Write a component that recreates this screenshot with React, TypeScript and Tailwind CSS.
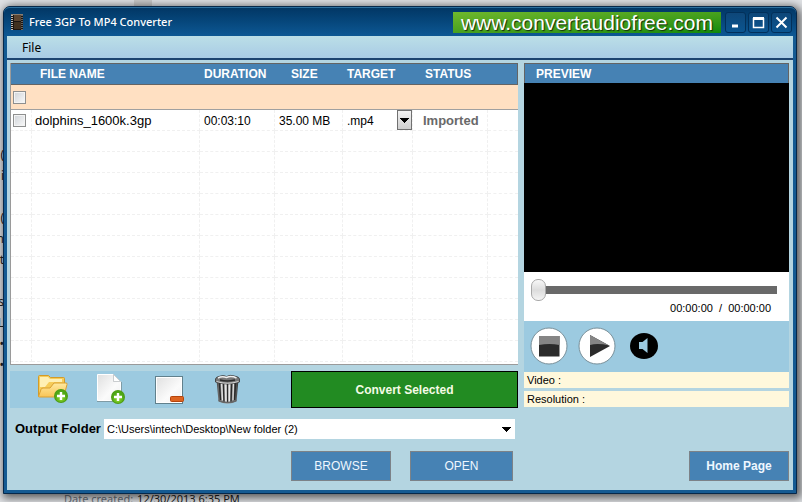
import { useState } from "react";
import type { ReactNode } from "react";

const COLUMNS = [
  { label: "FILE NAME", className: "pl-2" },
  { label: "DURATION", className: "pl-1" },
  { label: "SIZE", className: "pl-4" },
  { label: "TARGET", className: "pl-1" },
  { label: "STATUS", className: "pl-3" },
];

const FILES = [
  { name: "dolphins_1600k.3gp", duration: "00:03:10", size: "35.00 MB", target: ".mp4", status: "Imported" },
];

const EMPTY_ROWS = 11;

const CELL = "border-r border-b border-dashed border-[#f0f0f0] p-0";
const TEXT_CELL = "border-r border-b border-dashed border-[#f0f0f0] pt-[2px] pr-0 pb-0 leading-[18px]";

function Caret() {
  return (
    <svg width="9" height="5" viewBox="0 0 9 5" aria-hidden="true" shapeRendering="crispEdges">
      <path d="M0 0h9v1H8v1H7v1H6v1H5v1H4V4H3V3H2V2H1V1H0z" />
    </svg>
  );
}

function FilmIcon() {
  return (
    <svg width="12" height="16" viewBox="0 0 12 16" aria-hidden="true">
      <rect width="12" height="16" fill="#1b1512" />
      <rect x="3" y="1" width="7" height="6" fill="#5c4632" />
      <rect x="3" y="8" width="7" height="7" fill="#41301f" />
      <path d="M1 1v15" stroke="#f0ede8" strokeWidth="1.5" strokeDasharray="1 1" />
      <path d="M11 1v15" stroke="#b9b3aa" strokeWidth="1" strokeDasharray="1 1" />
      <path d="M0 .5h12" stroke="#8a7d70" />
    </svg>
  );
}

function PlusBadge({ x, y }: { x: number; y: number }) {
  return (
    <g transform={`translate(${x} ${y})`}>
      <circle r="7" fill="#4d9c12" />
      <circle r="6" fill="url(#badge)" />
      <path d="M-4 0h8M0-4v8" stroke="#fff" strokeWidth="2.4" />
    </g>
  );
}

function AddFolderIcon() {
  return (
    <svg width="32" height="32" viewBox="0 0 32 32" aria-hidden="true">
      <defs>
        <linearGradient id="folder" x1="0" y1="0" x2="0" y2="1">
          <stop offset="0" stopColor="#ffeaa0" />
          <stop offset="1" stopColor="#f8c455" />
        </linearGradient>
        <radialGradient id="badge" cy=".7">
          <stop offset="0" stopColor="#8fdb2b" />
          <stop offset="1" stopColor="#4fa715" />
        </radialGradient>
      </defs>
      <path d="M1.5 23.5v-20q0-1 1-1h9l2 2h13q1 0 1 1v4.500" fill="#f6cc59" stroke="#d39b28" />
      <path d="M3 4h8l2 2h12v3H12l-4 5H3z" fill="#fff0b5" />
      <path d="M1.5 23.500L4 16.500q.500-1.500 2-1.500h7l4-5h12q1.500 0 1 1.500L27 23q-.300 1-1.500 1h-23q-1 0-1-.500z" fill="url(#folder)" stroke="#d99f31" />
      <PlusBadge x={24} y={23} />
    </svg>
  );
}

function AddFileIcon() {
  return (
    <svg width="32" height="32" viewBox="0 0 32 32" aria-hidden="true">
      <defs>
        <linearGradient id="paper" x1="0" y1="0" x2="1" y2="1">
          <stop offset="0" stopColor="#dfdfdf" />
          <stop offset=".6" stopColor="#fbfbfb" />
          <stop offset="1" stopColor="#efefef" />
        </linearGradient>
      </defs>
      <path d="M1.500 1.500h16l7 7v19h-23z" fill="url(#paper)" stroke="#fff" />
      <path d="M1 28.500h24.500M25.500 9v19" fill="none" stroke="#7f9ba5" />
      <path d="M17.500 1.500v7h7z" fill="#fff" stroke="#b5b9bb" strokeWidth=".7" />
      <PlusBadge x={22} y={24} />
    </svg>
  );
}

function RemoveIcon() {
  return (
    <svg width="32" height="32" viewBox="0 0 32 32" aria-hidden="true">
      <rect x=".500" y="3.500" width="27" height="27" fill="url(#paper)" stroke="#61808c" />
      <rect x="1.500" y="4.500" width="25" height="25" fill="none" stroke="#fff" />
      <rect x="15.500" y="23.500" width="13" height="5" rx="1" fill="#dd6320" stroke="#b5440c" />
    </svg>
  );
}

function TrashIcon() {
  return (
    <svg width="32" height="32" viewBox="0 0 32 32" aria-hidden="true">
      <defs>
        <linearGradient id="can">
          <stop offset="0" stopColor="#444" />
          <stop offset=".3" stopColor="#bbb" />
          <stop offset=".5" stopColor="#f4f4f4" />
          <stop offset=".75" stopColor="#888" />
          <stop offset="1" stopColor="#333" />
        </linearGradient>
      </defs>
      <path d="M2.500 7l2 21q9 5 18 0l2-21z" fill="url(#can)" />
      <path d="M5.500 10l1 17M9.500 11l.500 18M13.500 11v18M17.500 11l-.500 18M21.500 10l-1 17" stroke="#2a2a2a" strokeWidth="1.500" />
      <path d="M7.500 10l1 17M11.500 11l.500 18M15.500 11v18M19.500 10l-.500 17" stroke="#e8e8e8" />
      <path d="M4.500 26.500q9 4.500 18 0v2q-9 4-18 0z" fill="#666" />
      <path d="M1.500 6q0-2 5-3 3-1 6 .500 4-2 8-.500 5 1 5 3v3q-12 4-24 0z" fill="#777" stroke="#333" strokeWidth=".8" />
      <path d="M4 5q4-2 8.500-.500 5-2 10 .500" fill="none" stroke="#efefef" strokeWidth="1.500" />
      <path d="M6 7q7 2 15 0" fill="none" stroke="#2b2b2b" strokeWidth="1.500" />
      <path d="M2.500 8.500q11 3.500 22 0" fill="none" stroke="#d8d8d8" />
    </svg>
  );
}

function StopIcon() {
  return (
    <svg width="38" height="38" viewBox="0 0 38 38" aria-hidden="true">
      <circle cx="19" cy="19" r="18" fill="#fff" stroke="#788f99" />
      <path d="M9 9h20.500v20.500H9z" fill="#2b2b2b" />
      <path d="M9 9h20.500v9q-10-2-20.500 0z" fill="#858585" />
    </svg>
  );
}

function PlayIcon() {
  return (
    <svg width="38" height="38" viewBox="0 0 38 38" aria-hidden="true">
      <circle cx="19" cy="19" r="18" fill="#fff" stroke="#788f99" />
      <path d="M12 8v22l20-11z" fill="#2b2b2b" />
      <path d="M12 8v10q8-2 19 .500z" fill="#858585" />
    </svg>
  );
}

function SpeakerIcon() {
  return (
    <svg width="28" height="28" viewBox="0 0 28 28" aria-hidden="true">
      <ellipse cx="14" cy="14" rx="14" ry="13" />
      <path d="M9 10h3.500l5-4v15l-5-4H9z" fill="#9ccae0" />
    </svg>
  );
}

function WindowButton({ label, children }: { label: string; children: ReactNode }) {
  return (
    <button
      type="button"
      aria-label={label}
      className="flex h-[21px] w-[21px] items-center justify-center rounded-[3px] border border-[#02305a] bg-gradient-to-b from-[#0e4779] to-[#0a5590]"
    >
      <svg width="13" height="13" viewBox="0 0 13 13" fill="none" stroke="#fff" strokeWidth="2" aria-hidden="true">
        {children}
      </svg>
    </button>
  );
}

function Check({ label, checked, onChange }: { label: string; checked: boolean; onChange: () => void }) {
  return (
    <input
      type="checkbox"
      aria-label={label}
      checked={checked}
      onChange={onChange}
      className="ml-[2px] block h-[13px] w-[13px] appearance-none border border-[#8e8f8f] bg-gradient-to-br from-[#cfd3d8] to-[#fafafa] shadow-[inset_0_0_0_1px_#f4f4f4] checked:bg-[#4682b4]"
    />
  );
}

// Slivers of the explorer window lying under the converter
function Backdrop() {
  return (
    <div aria-hidden="true" className="absolute inset-0 overflow-hidden bg-[#dfe1e4] font-['Noto_Sans'] text-[12px] text-[#222]">
      <div className="absolute top-0 left-[134px] h-2 w-[18px] bg-[#c9c9c9]" />
      <div className="absolute top-[144px] right-full -mr-1 flex flex-col items-end leading-[21px]">
        <span>(</span>
        <span>i</span>
        <span className="mt-[21px]">(</span>
        <span>n</span>
        <span>t</span>
        <span className="mt-[21px]">s</span>
        <span>L</span>
        <span>•</span>
        <span>•</span>
      </div>
      <div className="absolute top-[490px] left-16 flex gap-1 text-[11px] leading-[18px] whitespace-nowrap">
        <span className="text-[#6d7480]">Date created:</span>
        <span>12/30/2013 6:35 PM</span>
      </div>
    </div>
  );
}

export default function App() {
  const [selected, setSelected] = useState<string[]>([]);
  const [position, setPosition] = useState(0);

  const allSelected = selected.length === FILES.length;
  const toggle = (name: string) =>
    setSelected((s) => (s.includes(name) ? s.filter((n) => n !== name) : [...s, name]));

  return (
    <div className="relative min-h-screen pt-[6px] pr-[5px] pb-2 pl-[3px] font-['Liberation_Sans',sans-serif] text-[12px] text-black">
      <Backdrop />
      <div className="relative flex flex-col rounded-t-[7px] border border-[#06284a] bg-[#145a92] px-[3px] pb-[3px] shadow-[2px_2px_8px_2px_rgba(0,0,0,0.6)]">
        {/* Title bar */}
        <header className="-mx-[3px] flex h-[29px] items-center gap-1 rounded-t-[6px] border-t border-[#2c709f] bg-gradient-to-b from-[#023765] to-[#0d5894] pr-1 pl-[7px]">
          <FilmIcon />
          <h1 className="ml-[2px] flex-1 font-['Noto_Sans',sans-serif] text-[11px] font-medium text-white">Free 3GP To MP4 Converter</h1>
          <a
            href="#site"
            className="flex h-[21px] items-center bg-gradient-to-br from-[#6fb82d] to-[#0b8a0b] px-2 text-[21px] leading-[21px] text-white [text-shadow:1px_1px_1px_#102c08]"
          >
            www.convertaudiofree.com
          </a>
          <div className="flex gap-[2px]">
            <WindowButton label="Minimize"><path d="M3 10h6" strokeWidth="3" /></WindowButton>
            <WindowButton label="Maximize"><path d="M1 2.500h11" strokeWidth="3" /><path d="M1.500 2v9.500h10V2" strokeWidth="1.500" /></WindowButton>
            <WindowButton label="Close"><path d="M1.500 1.500l10 10M11.500 1.500l-10 10" /></WindowButton>
          </div>
        </header>

        <nav className="flex h-6 items-center border-b-2 border-[#1d4370] bg-gradient-to-b from-[#bbdfe7] to-[#a9cbe5] pl-[15px]">
          <button type="button" className="pt-[2px] font-['Noto_Sans',sans-serif] text-[12px] leading-4">File</button>
        </nav>

        <main className="flex gap-[6px] bg-[#b4d5e1] px-[3px] pt-[3px] pb-[9px]">
          <section className="flex min-w-0 flex-1 flex-col">
            {/* File list */}
            <div className="border-b border-l border-[#9a9a9a] bg-white pb-[2px]">
              <table className="w-full table-fixed border-separate border-spacing-0 text-left">
                <colgroup>
                  <col className="w-[21px]" />
                  <col />
                  <col className="w-[75px]" />
                  <col className="w-[68px]" />
                  <col className="w-[70px]" />
                  <col className="w-[75px]" />
                  <col className="w-[30px]" />
                </colgroup>
                <thead>
                  <tr className="h-[22px] bg-[#4682b4] text-white">
                    <th className="border-y border-[#646464] p-0" />
                    {COLUMNS.map((c) => (
                      <th key={c.label} className={`border-y border-[#646464] py-0 pr-0 leading-5 font-bold ${c.className}`}>{c.label}</th>
                    ))}
                    <th className="border-y border-r border-[#646464] p-0" />
                  </tr>
                  <tr className="h-[25px] bg-[#ffe0c2]">
                    <th colSpan={7} className="border-b border-[#a0a0a0] p-0">
                      <Check
                        label="Select all files"
                        checked={allSelected}
                        onChange={() => setSelected(allSelected ? [] : FILES.map((f) => f.name))}
                      />
                    </th>
                  </tr>
                </thead>
                <tbody>
                  {FILES.map((file) => (
                    <tr key={file.name} className="h-[21px]">
                      <td className={CELL}>
                        <Check label={`Select ${file.name}`} checked={selected.includes(file.name)} onChange={() => toggle(file.name)} />
                      </td>
                      <td className={`${TEXT_CELL} pl-[3px] text-[13px]`}>{file.name}</td>
                      <td className={`${TEXT_CELL} pl-1`}>{file.duration}</td>
                      <td className={`${TEXT_CELL} pl-1`}>{file.size}</td>
                      <td className={CELL}>
                        <div className="relative">
                          <select aria-label="Target format" defaultValue={file.target} className="block h-5 w-full appearance-none pt-[2px] pl-1 leading-[18px] outline-none">
                            <option>.mp4</option>
                            <option>.avi</option>
                          </select>
                          <span className="pointer-events-none absolute inset-y-0 right-0 flex w-[15px] items-center justify-center border border-[#707070] bg-gradient-to-b from-[#f2f2f2] to-[#cfcfcf]">
                            <Caret />
                          </span>
                        </div>
                      </td>
                      <td className={`${TEXT_CELL} pl-[10px] text-[13px] font-bold text-[#696969]`}>{file.status}</td>
                      <td className="border-b border-dashed border-[#f0f0f0] p-0" />
                    </tr>
                  ))}
                  {Array.from({ length: EMPTY_ROWS }).map((_, i) => (
                    <tr key={i} className="h-[21px]">
                      {Array.from({ length: 6 }).map((_, j) => (
                        <td key={j} className={CELL} />
                      ))}
                      <td className="border-b border-dashed border-[#f0f0f0] p-0" />
                    </tr>
                  ))}
                </tbody>
              </table>
            </div>

            <div className="mt-[6px] flex h-[37px] bg-[#9ccae0]">
              <div className="flex flex-1 items-center gap-[27px] pb-[2px] pl-[27px]">
                <button type="button" aria-label="Add folder"><AddFolderIcon /></button>
                <button type="button" aria-label="Add file"><AddFileIcon /></button>
                <button type="button" aria-label="Remove"><RemoveIcon /></button>
                <button type="button" aria-label="Clear list"><TrashIcon /></button>
              </div>
              <button type="button" className="w-[227px] border border-black bg-[#228b22] font-bold text-[#f5fbe6]">
                Convert Selected
              </button>
            </div>

            <div className="mt-[11px] flex items-center gap-[3px] pr-[3px] pl-[5px]">
              <label htmlFor="output" className="text-[13px] leading-5 font-bold">Output Folder</label>
              <div className="relative flex-1">
                <select id="output" className="block h-5 w-full appearance-none bg-white pl-[3px] text-[11px] leading-5 outline-none">
                  <option>C:\Users\intech\Desktop\New folder (2)</option>
                </select>
                <span className="pointer-events-none absolute inset-y-0 right-1 flex items-center">
                  <Caret />
                </span>
              </div>
            </div>

            <div className="mt-3 flex justify-end gap-[19px] pr-[5px] text-[12px] text-[#eef7ff]">
              <button type="button" className="h-[30px] w-[100px] border border-[#7c8288] bg-[#4682b4]">BROWSE</button>
              <button type="button" className="h-[30px] w-[103px] border border-[#7c8288] bg-[#4682b4]">OPEN</button>
            </div>
          </section>

          {/* Preview */}
          <aside className="mr-[1px] flex w-[265px] shrink-0 flex-col">
            <h2 className="h-5 border border-b-0 border-[#646464] bg-[#4682b4] pl-[11px] leading-5 font-bold text-white">PREVIEW</h2>
            <div className="h-[189px] bg-black" />
            <div className="h-[49px] bg-white pt-[7px] pr-3 pl-[7px]">
              <input
                type="range"
                aria-label="Position"
                min={0}
                max={100}
                value={position}
                onChange={(e) => setPosition(Number(e.target.value))}
                className="block h-[22px] w-full appearance-none bg-transparent [&::-webkit-slider-runnable-track]:h-2 [&::-webkit-slider-runnable-track]:bg-[#696969] [&::-webkit-slider-thumb]:-mt-[7px] [&::-webkit-slider-thumb]:h-[22px] [&::-webkit-slider-thumb]:w-[15px] [&::-webkit-slider-thumb]:appearance-none [&::-webkit-slider-thumb]:rounded-[7px] [&::-webkit-slider-thumb]:border [&::-webkit-slider-thumb]:border-[#a8a8a8] [&::-webkit-slider-thumb]:bg-[linear-gradient(#f8f8f8,#dcdcdc_50%,#f4f4f4)]"
              />
              <p className="pr-[6px] text-right text-[11px] leading-[14px] whitespace-pre">00:00:00  /  00:00:00</p>
            </div>
            <div className="flex h-[51px] items-center gap-[10px] bg-[#9ccae0] pb-[2px] pl-[6px]">
              <button type="button" aria-label="Stop"><StopIcon /></button>
              <button type="button" aria-label="Play"><PlayIcon /></button>
              <button type="button" aria-label="Mute" className="ml-1"><SpeakerIcon /></button>
            </div>
            <p className="h-4 bg-[#fff8dc] pl-[3px] text-[11px] leading-4">Video :</p>
            <p className="mt-[3px] h-4 bg-[#fff8dc] pl-[3px] text-[11px] leading-4">Resolution :</p>
            <button type="button" className="mt-auto h-[30px] w-[100px] self-end border border-[#7c8288] bg-[#4682b4] font-bold text-[#eef7ff]">
              Home Page
            </button>
          </aside>
        </main>
      </div>
    </div>
  );
}
